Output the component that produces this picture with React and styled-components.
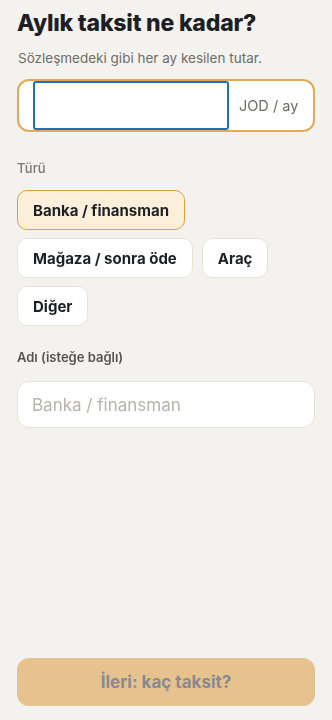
import styled, { createGlobalStyle } from "styled-components";

const Global = createGlobalStyle`
  html, body {
    margin: 0;
    padding: 0;
    background: #f4f2ee;
  }
  * {
    box-sizing: border-box;
  }
`;

const Page = styled.div`
  min-height: 720px;
  display: flex;
  flex-direction: column;
  padding: 8px 17px 14px 17px;
  font-family: Inter, "Noto Sans", sans-serif;
  color: #1d1f24;
`;

const Title = styled.h1`
  margin: 0;
  font-size: 23px;
  font-weight: 800;
  line-height: 30px;
  letter-spacing: -0.2px;
`;

const Sub = styled.p`
  margin: 11px 0 0 1px;
  font-size: 13.5px;
  color: #6e6c68;
  line-height: 18px;
`;

const AmountBox = styled.div`
  margin-top: 12px;
  height: 53px;
  display: flex;
  align-items: center;
  padding: 0 14px 0 14px;
  background: #fff;
  border: 2px solid #e3a956;
  border-radius: 12px;
  gap: 10px;
`;

const AmountInput = styled.input`
  width: 196px;
  height: 49px;
  border: 2px solid #1f6fc1;
  border-radius: 3px;
  outline: none;
  font: inherit;
  font-size: 16px;
  padding: 0 8px;
  background: #fff;
`;

const Unit = styled.span`
  font-size: 14.5px;
  color: #6e6c68;
`;

const Label = styled.div`
  margin-top: ${({ $top }) => $top}px;
  font-size: 13px;
  font-weight: ${({ $bold }) => ($bold ? 600 : 500)};
  color: ${({ $bold }) => ($bold ? "#55534f" : "#7a7873")};
  line-height: 18px;
`;

const Chips = styled.div`
  margin-top: 13px;
  display: flex;
  flex-wrap: wrap;
  gap: 8px 9px;
`;

const Chip = styled.button`
  height: 40px;
  padding: 0 15px;
  border-radius: 10px;
  font-family: inherit;
  font-size: 15px;
  font-weight: 700;
  color: #1d1f24;
  background: ${({ $active }) => ($active ? "#fdf0db" : "#fff")};
  border: ${({ $active }) => ($active ? "1.5px solid #dd9f3e" : "1px solid #e6e2da")};
  cursor: pointer;
`;

const NameInput = styled.input`
  margin-top: 15px;
  height: 47px;
  width: 100%;
  border: 1px solid #e6e2da;
  border-radius: 12px;
  background: #fff;
  padding: 0 14px;
  font-family: inherit;
  font-size: 17px;
  outline: none;
  &::placeholder {
    color: #b8b4ac;
  }
`;

const NextButton = styled.button`
  margin-top: auto;
  height: 48px;
  width: 100%;
  border: none;
  border-radius: 12px;
  background: #e6c28f;
  color: #8a8a8c;
  font-family: inherit;
  font-size: 17px;
  font-weight: 700;
`;

const types = ["Banka / finansman", "Mağaza / sonra öde", "Araç", "Diğer"];

export default function App() {
  return (
    <>
      <Global />
      <Page>
        <Title>Aylık taksit ne kadar?</Title>
        <Sub>Sözleşmedeki gibi her ay kesilen tutar.</Sub>
        <AmountBox>
          <AmountInput autoFocus inputMode="decimal" />
          <Unit>JOD / ay</Unit>
        </AmountBox>
        <Label $top={27}>Türü</Label>
        <Chips>
          {types.map((t, i) => (
            <Chip key={t} $active={i === 0}>
              {t}
            </Chip>
          ))}
        </Chips>
        <Label $top={22} $bold>
          Adı (isteğe bağlı)
        </Label>
        <NameInput placeholder="Banka / finansman" />
        <NextButton disabled>İleri: kaç taksit?</NextButton>
      </Page>
    </>
  );
}
